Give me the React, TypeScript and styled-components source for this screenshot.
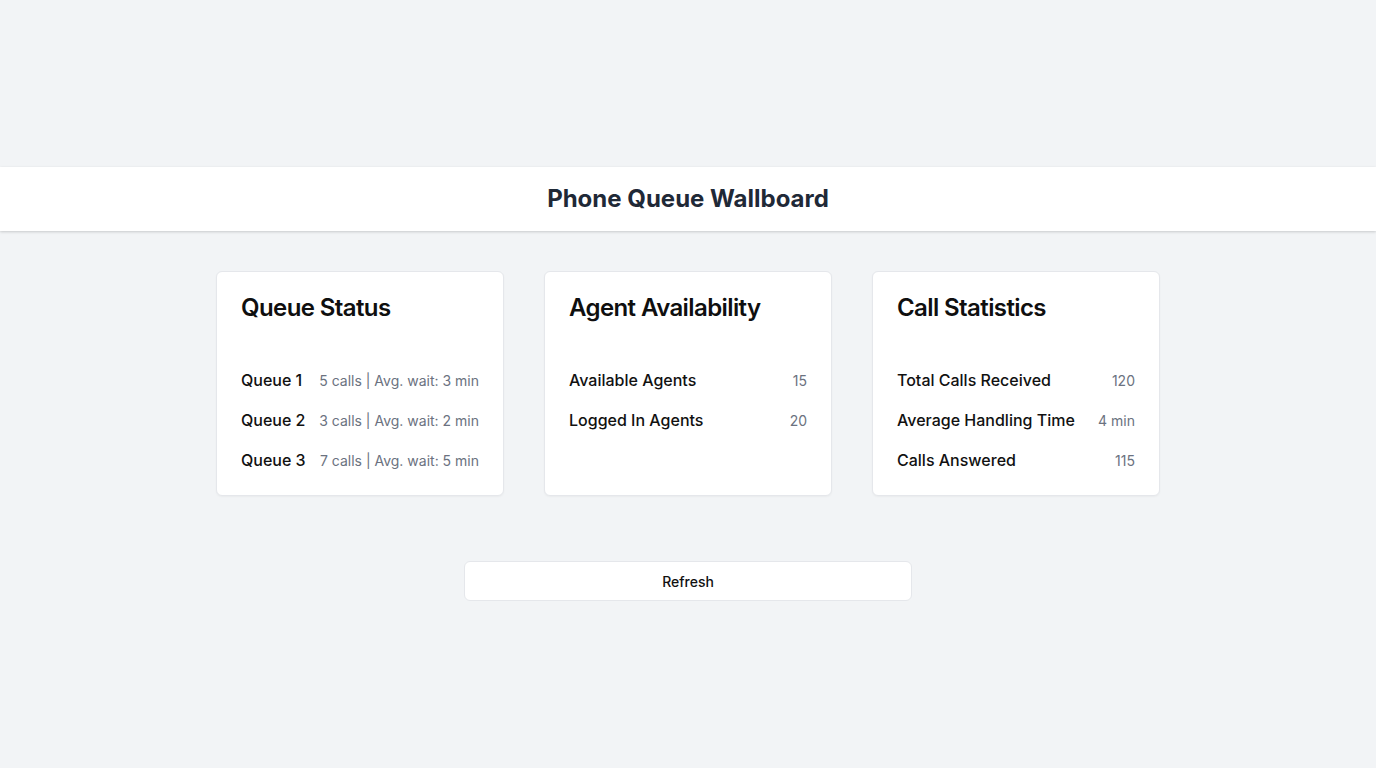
import React from "react";
import styled, { createGlobalStyle } from "styled-components";

const Global = createGlobalStyle`
  html, body { margin: 0; padding: 0; }
  body {
    background: #f2f4f6;
    font-family: Inter, "Noto Sans", sans-serif;
    color: #111111;
  }
  * { box-sizing: border-box; }
`;

const Page = styled.div`
  min-height: 100vh;
  display: flex;
  flex-direction: column;
  justify-content: center;
`;

const Header = styled.header`
  height: 64px;
  background: #ffffff;
  box-shadow: 0 1px 3px rgba(0, 0, 0, 0.12), 0 1px 2px rgba(0, 0, 0, 0.06);
  display: flex;
  align-items: center;
  justify-content: center;
`;

const HeaderTitle = styled.h1`
  margin: 0;
  font-size: 24px;
  font-weight: 700;
  color: #1f2937;
  line-height: 32px;
`;

const Cards = styled.main`
  display: grid;
  grid-template-columns: repeat(3, 288px);
  gap: 40px;
  justify-content: center;
  margin-top: 40px;
`;

const Card = styled.section`
  background: #ffffff;
  border: 1px solid #e5e7eb;
  border-radius: 6px;
  box-shadow: 0 1px 2px rgba(0, 0, 0, 0.04);
  padding: 24px;
  height: 225px;
`;

const CardTitle = styled.h2`
  margin: 0 0 48px;
  font-size: 24px;
  line-height: 24px;
  font-weight: 600;
  letter-spacing: -0.025em;
  color: #0f0f0f;
`;

const List = styled.ul`
  list-style: none;
  margin: 0;
  padding: 0;
  display: flex;
  flex-direction: column;
  gap: 16px;
`;

const Row = styled.li`
  display: flex;
  justify-content: space-between;
  align-items: center;
  height: 24px;
`;

const Label = styled.span`
  font-size: 16px;
  font-weight: 500;
  color: #111111;
`;

const Value = styled.span`
  font-size: 14px;
  color: #6b7280;
`;

const Footer = styled.div`
  display: flex;
  justify-content: center;
  margin-top: 65px;
`;

const Button = styled.button`
  width: 448px;
  height: 40px;
  background: #ffffff;
  border: 1px solid #e5e7eb;
  border-radius: 6px;
  font-family: Inter, "Noto Sans", sans-serif;
  font-size: 14px;
  font-weight: 500;
  color: #111111;
  cursor: pointer;
`;

const queues = [
  { name: "Queue 1", calls: 5, wait: 3 },
  { name: "Queue 2", calls: 3, wait: 2 },
  { name: "Queue 3", calls: 7, wait: 5 },
];

export default function App() {
  return (
    <>
      <Global />
      <Page>
        <Header>
          <HeaderTitle>Phone Queue Wallboard</HeaderTitle>
        </Header>
        <Cards>
          <Card>
            <CardTitle>Queue Status</CardTitle>
            <List>
              {queues.map((q) => (
                <Row key={q.name}>
                  <Label>{q.name}</Label>
                  <Value>
                    {q.calls} calls | Avg. wait: {q.wait} min
                  </Value>
                </Row>
              ))}
            </List>
          </Card>
          <Card>
            <CardTitle>Agent Availability</CardTitle>
            <List>
              <Row>
                <Label>Available Agents</Label>
                <Value>15</Value>
              </Row>
              <Row>
                <Label>Logged In Agents</Label>
                <Value>20</Value>
              </Row>
            </List>
          </Card>
          <Card>
            <CardTitle>Call Statistics</CardTitle>
            <List>
              <Row>
                <Label>Total Calls Received</Label>
                <Value>120</Value>
              </Row>
              <Row>
                <Label>Average Handling Time</Label>
                <Value>4 min</Value>
              </Row>
              <Row>
                <Label>Calls Answered</Label>
                <Value>115</Value>
              </Row>
            </List>
          </Card>
        </Cards>
        <Footer>
          <Button>Refresh</Button>
        </Footer>
      </Page>
    </>
  );
}
